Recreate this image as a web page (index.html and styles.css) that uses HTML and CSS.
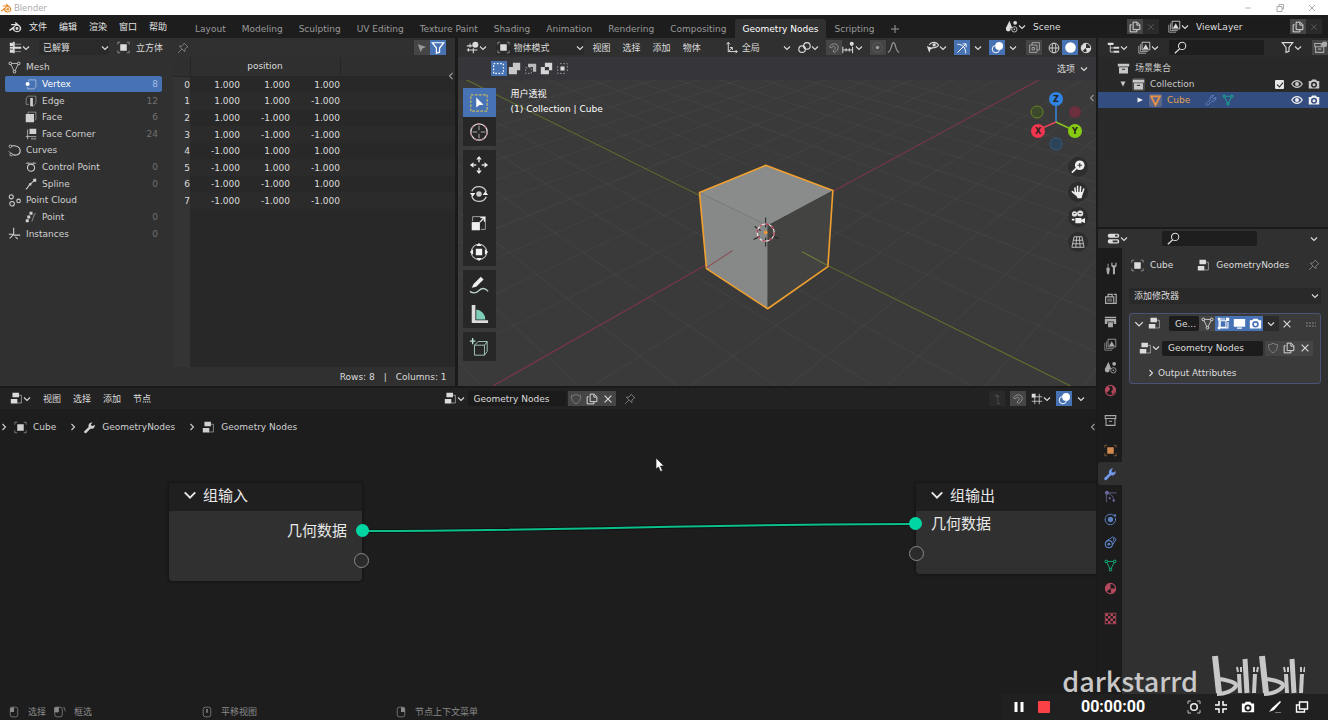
FILE: index.html
```html
<!DOCTYPE html>
<html lang="zh-CN">
<head>
<meta charset="utf-8">
<title>Blender</title>
<link rel="stylesheet" href="styles.css">
</head>
<body>
<svg class="sprite" aria-hidden="true">
  <symbol id="chev" viewBox="0 0 8 8"><path d="M1 2.5 4 5.5 7 2.5" fill="none" stroke="currentColor" stroke-width="1.1"/></symbol>
  <symbol id="right" viewBox="0 0 8 8"><path d="M2.5 1 5.5 4 2.5 7" fill="none" stroke="currentColor" stroke-width="1.1"/></symbol>
  <symbol id="left" viewBox="0 0 8 8"><path d="M5.5 1 2.5 4 5.5 7" fill="none" stroke="currentColor" stroke-width="1.1"/></symbol>
  <symbol id="blender" viewBox="0 0 16 16"><path d="M1 11.5 8.2 6H3.6V4.6h5.6L7.6 3.3l1.2-1 4.9 4.2A4.9 4.4 0 1 1 5.400 10.500L2.200 12.600Z" fill="currentColor"/><circle cx="10.300" cy="9.700" r="3" fill="var(--hole,#1d1d1d)"/><circle cx="10.300" cy="9.700" r="1.600" fill="currentColor"/></symbol>
  <symbol id="sheet" viewBox="0 0 16 16"><path d="M1 2h4v4H1zM1 7h14v2.500H1zM1 10.500h4v4H1z" fill="currentColor"/><path d="M6 1v14" stroke="currentColor" stroke-width="2"/><path d="M7 4h8M7 13h8" stroke="currentColor" stroke-opacity=".6" fill="none"/></symbol>
  <symbol id="object" viewBox="0 0 16 16"><path d="M4 4h8v8H4z" fill="currentColor"/><path d="M1 4.500V1.500h3M12 1.500h3v3M15 11.500v3h-3M4 14.500H1v-3" fill="none" stroke="currentColor" stroke-opacity=".6"/></symbol>
  <symbol id="pin" viewBox="0 0 16 16"><path d="m9.500 1.500 5 5-1.500.5-2.500 2.500V13L3 5.500l3.500-.200L9 3zM6.500 9.500 1.500 14.500" fill="none" stroke="currentColor" stroke-width="1.100"/></symbol>
  <symbol id="arrow" viewBox="0 0 16 16"><path d="m2.500 3 11 3.500-5 2.200-2.300 5z" fill="currentColor"/></symbol>
  <symbol id="funnel" viewBox="0 0 16 16"><path d="M1.500 2h13L9.800 8v4.800L6.200 14V8z" fill="none" stroke="currentColor" stroke-width="1.400"/></symbol>
  <symbol id="mesh" viewBox="0 0 16 16"><path d="M3 3h10L8 13.500z" fill="none" stroke="currentColor"/><g fill="var(--hole,#303030)" stroke="currentColor" stroke-width="1.200"><circle cx="2.800" cy="3" r="1.600"/><circle cx="13.200" cy="3" r="1.600"/><circle cx="8" cy="13.200" r="1.600"/></g></symbol>
  <symbol id="vertex" viewBox="0 0 16 16"><path d="M5 4.500V2.500h9.500v9L12 14.500H3.500V12" fill="none" stroke="currentColor" stroke-opacity=".6"/><circle cx="3.500" cy="8" r="2.700" fill="currentColor"/></symbol>
  <symbol id="edge" viewBox="0 0 16 16"><path d="M5 12.500H1.500V4l3-2.500h10v9l-3 4H9" fill="none" stroke="currentColor" stroke-opacity=".65"/><path d="M7 4h3.500v11H7z" fill="currentColor"/></symbol>
  <symbol id="face" viewBox="0 0 16 16"><path d="M4 4V1.500h10.500V11l-2 1.500" fill="none" stroke="currentColor" stroke-opacity=".7"/><path d="M1 4h11v11H1z" fill="currentColor"/></symbol>
  <symbol id="corner" viewBox="0 0 16 16"><path d="M6 1h9v7H6z" fill="currentColor"/><path d="M3.500 2v13M1 11.500h14M8 14.500h7" fill="none" stroke="currentColor"/></symbol>
  <symbol id="curve" viewBox="0 0 16 16"><path d="M4 2.500c6-1 11 1 11 6s-6 6-9 4.500" fill="none" stroke="currentColor" stroke-width="1.300"/><path d="m1 9 3.500 3.500" stroke="currentColor"/><circle cx="3" cy="2.800" r="1.600" fill="#303030" stroke="currentColor"/><circle cx="4" cy="13" r="1.600" fill="#303030" stroke="currentColor"/></symbol>
  <symbol id="cpoint" viewBox="0 0 16 16"><circle cx="8" cy="9" r="4.700" fill="none" stroke="currentColor" stroke-width="1.400"/><path d="M1 3h14M5 1.500 3.500 3 5 4.500M11 1.500 12.500 3 11 4.500" fill="none" stroke="currentColor" stroke-width=".9"/></symbol>
  <symbol id="spline" viewBox="0 0 16 16"><path d="M1 15C5 13 4 10 7 8s4-3 6-6" fill="none" stroke="currentColor" stroke-width="1.400"/><path d="M11 1h4v4h-4zM5.500 7h3v3h-3z" fill="currentColor"/></symbol>
  <symbol id="cloud" viewBox="0 0 16 16"><g fill="none" stroke="currentColor" stroke-width="1.300"><circle cx="4" cy="3.500" r="2.500"/><circle cx="5" cy="12" r="2.800"/><circle cx="13" cy="8.500" r="2.200"/></g></symbol>
  <symbol id="point" viewBox="0 0 16 16"><path d="M6 1h4v4H6zM3 6h4v4H3zM1 11h4v4H1z" fill="currentColor"/><path d="M14 3c-3 2-2 5-5 11" fill="none" stroke="currentColor" stroke-opacity=".5" stroke-width="1.500"/></symbol>
  <symbol id="instances" viewBox="0 0 16 16"><path d="M7 1v9M7 10l8 0M7 9 2 14M1 9h5M9 12l3 3" fill="none" stroke="currentColor" stroke-width="1.300"/></symbol>
  <symbol id="view3d" viewBox="0 0 16 16"><path d="M1 6h7M1 11h13M5 3v5M9 9v6M3 9v4" stroke="currentColor" stroke-width="1.300" fill="none"/><circle cx="11.500" cy="4.500" r="3.700" fill="currentColor"/></symbol>
  <symbol id="axes" viewBox="0 0 16 16"><path d="M4 13V2M2 4l2-2.500L6 4M4 13h11M13 11l2 2-2 2M4 13l5-5M9 11V8H6" fill="none" stroke="currentColor" stroke-width="1.200"/></symbol>
  <symbol id="link" viewBox="0 0 16 16"><g fill="none" stroke="currentColor" stroke-width="1.400"><circle cx="5" cy="10" r="4"/><circle cx="11" cy="6" r="4"/></g><circle cx="8" cy="8" r="1.200" fill="currentColor"/></symbol>
  <symbol id="magnet" viewBox="0 0 16 16"><path d="M2 6.500C5 1 13 1 13.500 7c.2 3-2 5-4.500 7L6.500 12c2-1.500 3.500-3 3-5-.6-2-3-2-5 1z" fill="none" stroke="currentColor" stroke-width="1.200"/></symbol>
  <symbol id="snap" viewBox="0 0 16 16"><path d="M1 7v8M5 9v4M9 9v4M13 7v8M1 11h12" fill="none" stroke="currentColor" stroke-width="1.200"/><circle cx="12" cy="3.500" r="2.500" fill="currentColor"/></symbol>
  <symbol id="gridsnap" viewBox="0 0 16 16"><path d="M5 1v14M11 1v14M1 5h14M1 11h14" fill="none" stroke="currentColor"/><path d="M1 1h5v5H1z" fill="currentColor"/></symbol>
  <symbol id="dot" viewBox="0 0 16 16"><circle cx="8" cy="8" r="6" fill="none" stroke="currentColor" stroke-opacity=".3"/><circle cx="8" cy="8" r="2.200" fill="currentColor"/></symbol>
  <symbol id="falloff" viewBox="0 0 16 16"><path d="M1 14C6 13 5 2 8 2s2 11 7 12" fill="none" stroke="currentColor" stroke-width="1.400"/></symbol>
  <symbol id="eyesel" viewBox="0 0 16 16"><path d="M4 5c3-5 9-4 11.500 0C13 8.500 9 9 7 7.500" fill="none" stroke="currentColor" stroke-width="1.400"/><circle cx="10" cy="4.800" r="2" fill="currentColor"/><path d="m1 6 8 3-3.500 1.500L4 14.500z" fill="currentColor"/></symbol>
  <symbol id="gizmo" viewBox="0 0 16 16"><path d="M2 3c7 0 11 5 11 12M2 14 13 3M9 2.500h4.500V7" fill="none" stroke="currentColor" stroke-width="1.300"/></symbol>
  <symbol id="overlay" viewBox="0 0 16 16"><circle cx="10" cy="6" r="4.800" fill="currentColor"/><circle cx="6" cy="10" r="4.500" fill="none" stroke="currentColor" stroke-width="1.200"/></symbol>
  <symbol id="xray" viewBox="0 0 16 16"><path d="M2 5h9v9H2zM5 5V2h9v9h-3M5 8h3v3H5z" fill="none" stroke="currentColor" stroke-width="1.100"/></symbol>
  <symbol id="wire" viewBox="0 0 16 16"><g fill="none" stroke="currentColor" stroke-width="1.200"><circle cx="8" cy="8" r="6.500"/><ellipse cx="8" cy="8" rx="2.600" ry="6.500"/><path d="M1.500 8h13"/></g></symbol>
  <symbol id="solid" viewBox="0 0 16 16"><circle cx="8" cy="8" r="6.500" fill="currentColor"/></symbol>
  <symbol id="material" viewBox="0 0 16 16"><circle cx="8" cy="8" r="6.300" fill="none" stroke="currentColor" stroke-width="1.300"/><path d="M8 1.500A6.500 6.500 0 0 0 3 12l5-4zM8 8h6.500A6.500 6.500 0 0 1 9 14.400z" fill="currentColor"/></symbol>
  <symbol id="scene" viewBox="0 0 16 16"><path d="M5.500 1 9 10H1z" fill="currentColor"/><circle cx="4" cy="11" r="3" fill="currentColor"/><circle cx="12.500" cy="3.500" r="2.300" fill="currentColor"/><circle cx="11.500" cy="11.500" r="3.300" fill="var(--hole,#1d1d1d)" stroke="currentColor"/><circle cx="11.500" cy="11.500" r="1" fill="currentColor"/></symbol>
  <symbol id="layers" viewBox="0 0 16 16"><path d="M5 1.500h9.500V11H5z" fill="none" stroke="currentColor"/><path d="M3 4v9h9M1 6v9h9" fill="none" stroke="currentColor" stroke-opacity=".8"/><path d="m6 10 3.500-6L13 10z" fill="currentColor"/></symbol>
  <symbol id="copy" viewBox="0 0 16 16"><path d="M5.500 1.500h5.500l3.500 3.500v6.500h-9zM10.500 2v3.500H14M3.500 5H1.500v9.500h9V12" fill="none" stroke="currentColor" stroke-width="1.300"/></symbol>
  <symbol id="x" viewBox="0 0 16 16"><path d="m3.500 3.500 9 9M12.500 3.500l-9 9" stroke="currentColor" stroke-width="1.500"/></symbol>
  <symbol id="shield" viewBox="0 0 16 16"><path d="M2 3.500C4.500 3.500 6 3 8 1.500c2 1.500 3.500 2 6 2 0 5-1 8.500-6 11-5-2.500-6-6-6-11z" fill="none" stroke="currentColor" stroke-width="1.100"/></symbol>
  <symbol id="outliner" viewBox="0 0 16 16"><path d="M1 2h7v3H1zM8 7h7v2.500H8zM8 12h7v2.500H8z" fill="currentColor"/><path d="M4 5v8.500h4M4 8.500h4" fill="none" stroke="currentColor"/></symbol>
  <symbol id="search" viewBox="0 0 16 16"><circle cx="10" cy="6" r="4.500" fill="none" stroke="currentColor" stroke-width="1.300"/><path d="m7 9.500-6 5.500" stroke="currentColor" stroke-width="1.500"/></symbol>
  <symbol id="newcol" viewBox="0 0 16 16"><path d="M2 7h10v7H2zM1 3h8v4H1zM5 10h4" fill="none" stroke="currentColor" stroke-width="1.300"/><circle cx="13" cy="4" r="3.500" fill="currentColor"/></symbol>
  <symbol id="box" viewBox="0 0 16 16"><path d="M1 2h14v3.500H1zM2.500 6.500h11V14h-11z" fill="currentColor"/><path d="M6 9h4" stroke="#444" stroke-width="1.500"/></symbol>
  <symbol id="boxline" viewBox="0 0 16 16"><path d="M1.500 2h13v3.500h-13zM2.500 5.500v8.500h11V5.500M6 9h4" fill="none" stroke="currentColor" stroke-width="1.300"/></symbol>
  <symbol id="eye" viewBox="0 0 16 16"><path d="M1 8c3.500-6 10.500-6 14 0-3.500 6-10.500 6-14 0z" fill="none" stroke="currentColor" stroke-width="1.500"/><circle cx="8" cy="8" r="2.700" fill="currentColor"/></symbol>
  <symbol id="camera" viewBox="0 0 16 16"><path fill-rule="evenodd" d="M1 4h3l1.500-2h5L12 4h3v10H1zm7 1a4 4 0 1 0 0 8 4 4 0 0 0 0-8zm0 2a2 2 0 1 1 0 4 2 2 0 0 1 0-4z" fill="currentColor"/></symbol>
  <symbol id="wrench" viewBox="0 0 16 16"><path d="M1.500 12.500 7 7.500C6 4.500 8 1.500 11.500 1.800L9.500 4.500l2 2 3-2c.5 3.500-2.300 5.800-5.500 5L4 14.800c-1.500.8-3.200-.8-2.500-2.300z" fill="currentColor"/></symbol>
  <symbol id="wrenchline" viewBox="0 0 16 16"><path d="M1.500 12.500 7 7.500C6 4.500 8 1.500 11.500 1.800L9.500 4.500l2 2 3-2c.5 3.500-2.300 5.800-5.500 5L4 14.800c-1.500.8-3.200-.8-2.500-2.300z" fill="none" stroke="currentColor"/></symbol>
  <symbol id="tri" viewBox="0 0 16 16"><path d="M2.500 3h11L8 13.500z" fill="none" stroke="currentColor" stroke-width="2.200"/></symbol>
  <symbol id="props" viewBox="0 0 16 16"><rect x="1" y="2" width="14" height="5" rx="2" fill="currentColor"/><rect x="1" y="9" width="14" height="5" rx="2" fill="currentColor"/><path d="M10 3.500h3v2h-3zM7 10.500h6v2H7z" fill="#303030"/></symbol>
  <symbol id="nodes" viewBox="0 0 16 16"><path d="M3 1h8v5.500H3zM1 8.500h8V14H1z" fill="currentColor"/><path d="M11 4h3v9.500H9" fill="none" stroke="currentColor" stroke-opacity=".7"/></symbol>
  <symbol id="tool" viewBox="0 0 16 16"><path d="M3 7h4v3L6 15H4L3 10zM4.500 2h1v5h-1zM9 1v4l2 2v8h2.500V7l2-2V1h-1.500v3h-3.500V1z" fill="currentColor"/></symbol>
  <symbol id="render" viewBox="0 0 16 16"><path d="M2 6h10v8H2zM5 6V3h5v3M12 3h3v11h-3" fill="none" stroke="currentColor" stroke-width="1.500"/><path d="M4 8h6v4H4z" fill="currentColor" fill-opacity=".5"/></symbol>
  <symbol id="output" viewBox="0 0 16 16"><path d="M1 2h14v2H1zM1 5h14v6h-3V8H4v3H1zM5 9h6v6H5z" fill="currentColor"/></symbol>
  <symbol id="world" viewBox="0 0 16 16"><circle cx="8" cy="8" r="6.300" fill="none" stroke="currentColor" stroke-width="1.300"/><path d="M3 3c3 0 5 2 4 4s-3 2-4 4L1.500 7zM10 2l4 3-1 5-3 3-1-4 2-2z" fill="currentColor"/></symbol>
  <symbol id="particles" viewBox="0 0 16 16"><circle cx="3.500" cy="3.500" r="2.500" fill="currentColor"/><path d="M3 3.500V15M3.500 3.500h12M4 4c6 1 8 5 8 9" fill="none" stroke="currentColor"/><circle cx="12" cy="13" r="1.500" fill="currentColor"/><circle cx="7" cy="10" r="1.300" fill="currentColor"/></symbol>
  <symbol id="physics" viewBox="0 0 16 16"><path d="M12 3A6.500 6.500 0 1 0 14 6" fill="none" stroke="currentColor" stroke-width="1.200"/><circle cx="8" cy="8" r="3.300" fill="currentColor"/><circle cx="13.500" cy="3" r="1.500" fill="currentColor"/></symbol>
  <symbol id="constraint" viewBox="0 0 16 16"><circle cx="6" cy="10" r="4.300" fill="none" stroke="currentColor" stroke-width="1.500"/><circle cx="6" cy="10" r="1.700" fill="currentColor"/><path d="m3 6 8-5 4 3-4.500 7M12 2.500v4" fill="none" stroke="currentColor" stroke-width="1.200"/></symbol>
  <symbol id="texture" viewBox="0 0 16 16"><rect x="1.500" y="1.500" width="13" height="13" fill="none" stroke="currentColor"/><path d="M2 2h3v3H2zM8 2h3v3H8zM5 5h3v3H5zM11 5h3v3h-3zM2 8h3v3H2zM8 8h3v3H8zM5 11h3v3H5zM11 11h3v3h-3z" fill="currentColor"/></symbol>
  <symbol id="editmode" viewBox="0 0 16 16"><path d="M4 4.500h7v8H4zM2 2.500h8M2.500 2v12M2 13.500h11.500V6" fill="none" stroke="currentColor" stroke-width="1.300"/><path d="M11 1h4v4h-4zM1 1h3v3H1zM1 12h3v3H1z" fill="currentColor"/></symbol>
  <symbol id="monitor" viewBox="0 0 16 16"><path d="M1 2.500h14V12H1zM5 13h6v1.500H5z" fill="currentColor"/></symbol>
  <symbol id="mouseL" viewBox="0 0 16 16"><rect x="3" y="1.500" width="10" height="13" rx="3" fill="none" stroke="currentColor"/><path d="M3 2h5v6H3z" fill="currentColor"/></symbol>
  <symbol id="mouseD" viewBox="0 0 16 16"><rect x="1" y="1.500" width="10" height="13" rx="3" fill="none" stroke="currentColor"/><path d="M1 2h5v6H1zM13 1l2 6" fill="currentColor" stroke="currentColor"/></symbol>
  <symbol id="mouseM" viewBox="0 0 16 16"><rect x="3" y="1.500" width="10" height="13" rx="3" fill="none" stroke="currentColor"/><path d="M7 4h2v5H7z" fill="currentColor"/></symbol>
  <symbol id="mouseR" viewBox="0 0 16 16"><rect x="3" y="1.500" width="10" height="13" rx="3" fill="none" stroke="currentColor"/><path d="M8 2h5v6H8z" fill="currentColor"/></symbol>
</svg>

<header class="titlebar">
  <svg class="i12 logo-orange"><use href="#blender"/></svg><span>Blender</span>
  <div class="winctl">
    <svg class="i10" viewBox="0 0 10 10"><path d="M2 5h6" stroke="#bbb"/></svg>
    <svg class="i10" viewBox="0 0 10 10"><path d="M2 3.500h5v5H2zM4 3.500v-2h4.500V6H7" fill="none" stroke="#aaa"/></svg>
    <svg class="i10" viewBox="0 0 10 10"><path d="m2 2 6 6M8 2 2 8" stroke="#aaa"/></svg>
  </div>
</header>

<nav class="topbar">
  <svg class="i14"><use href="#blender"/></svg>
  <div class="menus appmenus"><button>文件</button><button>编辑</button><button>渲染</button><button>窗口</button><button>帮助</button></div>
  <div class="tabs">
    <button>Layout</button><button>Modeling</button><button>Sculpting</button><button>UV Editing</button><button>Texture Paint</button><button>Shading</button><button>Animation</button><button>Rendering</button><button>Compositing</button><button class="active">Geometry Nodes</button><button>Scripting</button><button aria-label="添加工作区"><svg class="i8" viewBox="0 0 8 8"><path d="M4 0v8M0 4h8" stroke="currentColor"/></svg></button>
  </div>
  <div class="idblock">
    <button class="ed" aria-label="场景"><svg class="i13"><use href="#scene"/></svg><svg class="i8"><use href="#chev"/></svg></button>
    <input class="field scene-name" value="Scene" aria-label="场景名称">
    <button class="sq" aria-label="新建场景"><svg class="i12"><use href="#copy"/></svg></button><button class="sq off" aria-label="移除场景"><svg class="i10"><use href="#x"/></svg></button>
  </div>
  <div class="idblock">
    <button class="ed" aria-label="视图层"><svg class="i13"><use href="#layers"/></svg><svg class="i8"><use href="#chev"/></svg></button>
    <input class="field scene-name" value="ViewLayer" aria-label="视图层名称">
    <button class="sq" aria-label="新建视图层"><svg class="i12"><use href="#copy"/></svg></button><button class="sq off" aria-label="移除视图层"><svg class="i10"><use href="#x"/></svg></button>
  </div>
</nav>

<main class="workspace">
  <div class="left">
    <div class="upper">
      <section class="area spreadsheet">
        <div class="hdr">
          <button class="ed" aria-label="编辑器类型"><svg class="i13"><use href="#sheet"/></svg><svg class="i8"><use href="#chev"/></svg></button>
          <label class="drop drop-eval"><select aria-label="求值状态"><option>已解算</option></select><svg class="i8"><use href="#chev"/></svg></label>
          <span class="objname"><svg class="i13"><use href="#object"/></svg>立方体</span>
          <button class="bare dim" aria-label="固定"><svg class="i12"><use href="#pin"/></svg></button>
          <span class="grow"></span>
          <button class="sq dim" aria-label="仅选中项"><svg class="i12"><use href="#arrow"/></svg></button><button class="sq on" aria-label="筛选"><svg class="i14"><use href="#funnel"/></svg></button>
        </div>
        <div class="sheetbody">
          <ul class="tree">
            <li><svg class="i13"><use href="#mesh"/></svg><span>Mesh</span></li>
            <li class="child sel"><svg class="i12"><use href="#vertex"/></svg><span>Vertex</span><b>8</b></li>
            <li class="child"><svg class="i12"><use href="#edge"/></svg><span>Edge</span><b>12</b></li>
            <li class="child"><svg class="i12"><use href="#face"/></svg><span>Face</span><b>6</b></li>
            <li class="child"><svg class="i12"><use href="#corner"/></svg><span>Face Corner</span><b>24</b></li>
            <li><svg class="i13"><use href="#curve"/></svg><span>Curves</span></li>
            <li class="child"><svg class="i12"><use href="#cpoint"/></svg><span>Control Point</span><b>0</b></li>
            <li class="child"><svg class="i12"><use href="#spline"/></svg><span>Spline</span><b>0</b></li>
            <li><svg class="i13"><use href="#cloud"/></svg><span>Point Cloud</span></li>
            <li class="child"><svg class="i12"><use href="#point"/></svg><span>Point</span><b>0</b></li>
            <li><svg class="i13"><use href="#instances"/></svg><span>Instances</span><b>0</b></li>
          </ul>
          <div class="sheet">
            <table>
              <colgroup><col class="c-idx"><col class="c-val"><col class="c-val"><col class="c-val"><col></colgroup>
              <thead><tr><th></th><th colspan="3">position</th><th class="rest"></th></tr></thead>
              <tbody>
                <tr><td>0</td><td>1.000</td><td>1.000</td><td>1.000</td><td></td></tr>
                <tr><td>1</td><td>1.000</td><td>1.000</td><td>-1.000</td><td></td></tr>
                <tr><td>2</td><td>1.000</td><td>-1.000</td><td>1.000</td><td></td></tr>
                <tr><td>3</td><td>1.000</td><td>-1.000</td><td>-1.000</td><td></td></tr>
                <tr><td>4</td><td>-1.000</td><td>1.000</td><td>1.000</td><td></td></tr>
                <tr><td>5</td><td>-1.000</td><td>1.000</td><td>-1.000</td><td></td></tr>
                <tr><td>6</td><td>-1.000</td><td>-1.000</td><td>1.000</td><td></td></tr>
                <tr><td>7</td><td>-1.000</td><td>-1.000</td><td>-1.000</td><td></td></tr>
              </tbody>
            </table>
            <svg class="i8 fold"><use href="#left"/></svg>
          </div>
        </div>
        <footer class="sheetfoot"><span>Rows: 8</span><span>|</span><span>Columns: 1</span></footer>
      </section>

      <section class="area viewport">
        <div class="hdr vhdr">
          <button class="ed" aria-label="编辑器类型"><svg class="i13"><use href="#view3d"/></svg><svg class="i8"><use href="#chev"/></svg></button>
          <label class="drop drop-mode"><svg class="i13"><use href="#object"/></svg><select aria-label="模式"><option>物体模式</option></select><svg class="i8"><use href="#chev"/></svg></label>
          <div class="menus"><button>视图</button><button>选择</button><button>添加</button><button>物体</button></div>
          <span class="grow"></span>
          <label class="drop drop-orient"><svg class="i13"><use href="#axes"/></svg><select aria-label="坐标系"><option>全局</option></select><svg class="i8"><use href="#chev"/></svg></label>
          <button class="ed" aria-label="轴心点"><svg class="i13"><use href="#link"/></svg><svg class="i8"><use href="#chev"/></svg></button>
          <div class="pair"><button class="sq dim" aria-label="吸附"><svg class="i12"><use href="#magnet"/></svg></button><button class="ed" aria-label="吸附到"><svg class="i13"><use href="#snap"/></svg><svg class="i8"><use href="#chev"/></svg></button></div>
          <div class="pair"><button class="sq dim" aria-label="衰减编辑"><svg class="i13"><use href="#dot"/></svg></button><button class="sq clear dim" aria-label="衰减"><svg class="i13"><use href="#falloff"/></svg></button></div>
          <span class="grow"></span>
          <div class="viewctl">
          <button class="ed" aria-label="可见性"><svg class="i13"><use href="#eyesel"/></svg><svg class="i8"><use href="#chev"/></svg></button>
          <div class="pair wide"><button class="sq on" aria-label="Gizmo"><svg class="i12"><use href="#gizmo"/></svg></button><svg class="i8"><use href="#chev"/></svg></div>
          <div class="pair wide"><button class="sq on" aria-label="叠加层"><svg class="i13"><use href="#overlay"/></svg></button><svg class="i8"><use href="#chev"/></svg></div>
          <button class="sq" aria-label="透视模式"><svg class="i13"><use href="#xray"/></svg></button>
          <div class="pair shade"><button class="sq clear" aria-label="线框"><svg class="i12"><use href="#wire"/></svg></button><button class="sq on" aria-label="实体"><svg class="i13"><use href="#solid"/></svg></button><button class="sq clear" aria-label="材质预览"><svg class="i12"><use href="#material"/></svg></button></div>
          </div>
        </div>
        <div class="scene">
          <svg class="scene3d" viewBox="0 0 639 328" preserveAspectRatio="xMidYMid slice" role="img" aria-label="Cube">
            <g fill="none" stroke="#fff" stroke-opacity=".04">
              <path d="M-460-212 24 328M-460-212 122 328M-460-212 220 328M-460-212 318 328M-460-212 416 328M-460-212 514 328M-460-212 710 328M-460-212 808 328M-460-212 906 328M-460-212 1004 328M-460-212 1102 328M-460-212 1200 328M-460-212 1298 328M-460-212 1396 328M-460-212 1494 328M-460-212 1592 328"/>
              <path d="M1000-212 135 328M1000-212 233 328M1000-212 331 328M1000-212 429 328M1000-212 527 328M1000-212 625 328M1000-212-61 328M1000-212-159 328M1000-212-257 328M1000-212-355 328M1000-212-453 328M1000-212-551 328M1000-212-649 328M1000-212-747 328M1000-212-845 328M1000-212-943 328"/>
            </g>
            <path d="M36 328 L249 207M375 134 582 22" stroke="#86354a"/>
            <path d="M8 22 242 138M370 208 612 328" stroke="#66702a"/>
            <path d="M308 108 242 135 310 168 375 133z" fill="#8a8c8b"/>
            <path d="M242 135 310 168V251L249 211z" fill="#868988"/>
            <path d="M310 168 375 133 370 209 310 251z" fill="#434441"/>
            <path d="M308 108 242 135 249 211 310 251 370 209 375 133z" fill="none" stroke="#f0a030" stroke-width="1.600" stroke-linejoin="round"/>
            <path d="M249 210 275 193" stroke="#8a4a50"/><path d="M344 194 370 208" stroke="#78803a"/>
            <path d="M308 160v10M308 180v9M296 182l6-3M313 178l8 3M297 169l6 4" stroke="#222"/>
            <circle cx="308" cy="175" r="8.500" fill="none" stroke="#eee" stroke-width="1.200"/><circle cx="308" cy="175" r="8.500" fill="none" stroke="#b33950" stroke-width="1.300" stroke-dasharray="3.300 3.300"/>
            <circle cx="308" cy="175" r="1.800" fill="#f5962d"/>
          </svg>
          <div class="toolsettings">
            <div class="selmodes">
              <button class="sq on" aria-label="新建选择"><svg class="i13" viewBox="0 0 16 16"><rect x="2" y="2" width="12" height="12" fill="none" stroke="#fff" stroke-width="1.400" stroke-dasharray="2 2"/></svg></button>
              <button class="sq clear" aria-label="扩展选择"><svg class="i13" viewBox="0 0 16 16"><path d="M6 1h9v9h-4v5H1V6h5z" fill="#c8c8c8"/></svg></button>
              <button class="sq clear" aria-label="减去选择"><svg class="i13" viewBox="0 0 16 16"><path d="M5 2h10v10h-4V6H5z" fill="#bbb"/><rect x="2" y="7" width="7" height="7" fill="none" stroke="#aaa" stroke-dasharray="2 2"/></svg></button>
              <button class="sq clear" aria-label="反转选择"><svg class="i13" viewBox="0 0 16 16"><path fill-rule="evenodd" d="M6 1h9v9h-4v5H1V6h5zm0 5v4h5V6z" fill="#d5d5d5"/></svg></button>
              <button class="sq clear" aria-label="相交选择"><svg class="i13" viewBox="0 0 16 16"><path d="M5.500 5.500h5v5h-5z" fill="#ddd"/><path d="M5 2h9v9M11 14H2V5" fill="none" stroke="#aaa" stroke-dasharray="2 2"/></svg></button>
            </div>
            <button class="options">选项<svg class="i8"><use href="#chev"/></svg></button>
          </div>
          <div class="overlaytext"><p>用户透视</p><p>(1) Collection | Cube</p></div>
          <div class="toolbar">
            <div class="toolgroup">
              <button class="on" aria-label="框选"><svg class="i22" viewBox="0 0 22 22"><rect x="2" y="2" width="18" height="18" fill="none" stroke="#c9b860" stroke-width="1.300" stroke-dasharray="3 1.500"/><path d="m8 5 8 8-4.500.3L8 16z" fill="#fff"/></svg></button>
              <button aria-label="游标"><svg class="i22" viewBox="0 0 22 22"><circle cx="11" cy="11" r="9" fill="none" stroke="#ddd" stroke-width="1.400"/><circle cx="11" cy="11" r="9" fill="none" stroke="#b98088" stroke-width="1.400" stroke-dasharray="4 4"/><path d="M11 4v5M11 13v5M4 11h5M13 11h5" stroke="#bbb"/></svg></button>
            </div>
            <div class="toolgroup">
              <button aria-label="移动"><svg class="i22" viewBox="0 0 22 22"><path d="m11 1 3 4H8zM11 21l3-4H8zM1 11l4-3v6zM21 11l-4-3v6z" fill="#eee"/><path d="M11 5v3M11 14v3M5 11h3M14 11h3" stroke="#ddd" stroke-width="1.600"/></svg></button>
              <button aria-label="旋转"><svg class="i22" viewBox="0 0 22 22"><path d="M3 8a8.500 8.500 0 0 1 16 1M19 14a8.500 8.500 0 0 1-16-1" fill="none" stroke="#ccc" stroke-width="1.500"/><circle cx="11" cy="11" r="3" fill="#ccc"/><path d="M1 10h6l-3 4zM15 12h6l-3-4z" fill="#eee"/></svg></button>
              <button aria-label="缩放"><svg class="i22" viewBox="0 0 22 22"><path d="M4 9V4h14v14h-5" fill="none" stroke="#aaa"/><path d="M3 10h9v9H3z" fill="#eee"/><path d="m12 10 4-4M12.500 5H17v4.500" fill="none" stroke="#eee" stroke-width="1.400"/></svg></button>
              <button aria-label="变换"><svg class="i22" viewBox="0 0 22 22"><circle cx="11" cy="11" r="8.500" fill="none" stroke="#bbb" stroke-width="1.200"/><path d="M7.500 7.500h7v7h-7zM11 1l3 3.500H8zM11 21l3-3.500H8zM1 11l3.500-3v6zM21 11l-3.500-3v6z" fill="#f2f2f2"/></svg></button>
            </div>
            <div class="toolgroup">
              <button aria-label="标注"><svg class="i22" viewBox="0 0 22 22"><path d="m3 14 2-4 8-8 3 3-8 8z" fill="#eee"/><path d="M1 18c4 3 7 2 10-1s7-3 10 1" fill="none" stroke="#bcd0cc" stroke-width="1.500"/></svg></button>
              <button aria-label="测量"><svg class="i22" viewBox="0 0 22 22"><path d="M8 6a11 11 0 0 1 10 11H8z" fill="#7fcfb8"/><path d="M3 1h4v17h14v3H3z" fill="#ddd"/></svg></button>
            </div>
            <div class="toolgroup">
              <button aria-label="添加立方体"><svg class="i22" viewBox="0 0 22 22"><path d="M6 9h11v11H6zM6 9l4-4h10v11l-3 4M17 9l3-4" fill="none" stroke="#a9cdc4"/><path d="M4 1v7M1 4.500h6" stroke="#b8e0d5" stroke-width="1.500"/></svg></button>
            </div>
          </div>
          <div class="navgizmo">
            <svg class="axisball" viewBox="0 0 56 64">
              <path d="M27 31V8" stroke="#3a86d8" stroke-width="1.500"/><path d="M27 31 9 39" stroke="#e0455a" stroke-width="1.500"/><path d="M27 31l19 9" stroke="#86c01f" stroke-width="1.500"/>
              <circle cx="8" cy="21" r="6" fill="#3c4a2c" stroke="#68861f"/><circle cx="46" cy="21" r="6" fill="#6b2f3d"/><circle cx="27" cy="53" r="6" fill="#2d435a" stroke="#34597f"/>
              <circle cx="27" cy="8" r="7" fill="#2f83e3"/><circle cx="9" cy="40" r="7" fill="#f2364f"/><circle cx="46" cy="40" r="7" fill="#86cb12"/>
              <text x="27" y="11" text-anchor="middle">Z</text><text x="9" y="43" text-anchor="middle">X</text><text x="46" y="43" text-anchor="middle">Y</text>
            </svg>
            <div class="navbtns">
              <button aria-label="缩放视图"><svg class="i14" viewBox="0 0 16 16"><circle cx="10" cy="6" r="5.500" fill="#eee"/><path d="m6 9.500-5 5" stroke="#eee" stroke-width="2"/><path d="M10 3.500v5M7.500 6h5" stroke="#333" stroke-width="1.200"/></svg></button>
              <button aria-label="移动视图"><svg class="i14" viewBox="0 0 16 16"><path d="M5 9 4.500 3.500M7.500 8V1.500M10.500 8 11 2M13 9l1.500-4.500M5.500 11 1.500 7.500" stroke="#eee" stroke-width="1.800" stroke-linecap="round"/><path d="M4 8h10l-2 7H7.500z" fill="#eee"/></svg></button>
              <button aria-label="相机视图"><svg class="i14" viewBox="0 0 16 16"><circle cx="4" cy="4.500" r="3" fill="#ddd"/><circle cx="10.500" cy="4" r="3.500" fill="#ddd"/><path d="M5 9h7v6H5zM12 11l4-2v6l-4-2zM1 10h3v2H1z" fill="#eee"/><path d="M3 4h2M9 4h3" stroke="#333"/></svg></button>
              <button aria-label="切换正交"><svg class="i14" viewBox="0 0 16 16"><path d="M3.500 2h9L15 14H1zM3 6h10M2 10h12M6.500 2 5.500 14M9.500 2l1 12" fill="none" stroke="#ccc"/></svg></button>
            </div>
          </div>
          <svg class="i8 fold"><use href="#left"/></svg>
        </div>
      </section>
    </div>

    <section class="area nodeeditor">
      <div class="hdr nhdr">
        <div class="nleft"><button class="ed" aria-label="编辑器类型"><svg class="i13"><use href="#nodes"/></svg><svg class="i8"><use href="#chev"/></svg></button>
        <div class="menus"><button>视图</button><button>选择</button><button>添加</button><button>节点</button></div></div>
        <div class="ncenter"><button class="ed" aria-label="节点树"><svg class="i13"><use href="#nodes"/></svg><svg class="i8"><use href="#chev"/></svg></button><input class="field tree-name" value="Geometry Nodes" aria-label="节点树名称"><button class="sq" aria-label="伪用户"><svg class="i12 faint"><use href="#shield"/></svg></button><button class="sq" aria-label="新建"><svg class="i12"><use href="#copy"/></svg></button><button class="sq" aria-label="断开"><svg class="i12"><use href="#x"/></svg></button><button class="bare dim" aria-label="固定"><svg class="i12"><use href="#pin"/></svg></button></div>
        <div class="nright"><button class="sq off" aria-label="上一级"><svg class="i12" viewBox="0 0 16 16"><path d="M5 3h4v11h3M6 6l3-3 3 3" fill="none" stroke="currentColor"/></svg></button><button class="sq dim" aria-label="吸附"><svg class="i12"><use href="#magnet"/></svg></button><button class="ed" aria-label="吸附到"><svg class="i12"><use href="#gridsnap"/></svg><svg class="i8"><use href="#chev"/></svg></button><button class="sq on" aria-label="叠加层"><svg class="i13"><use href="#overlay"/></svg></button><svg class="i8"><use href="#chev"/></svg></div>
      </div>
      <div class="canvas">
        <nav class="crumbs"><svg class="i8"><use href="#right"/></svg><a href="#cube"><svg class="i13"><use href="#object"/></svg>Cube</a><svg class="i8"><use href="#right"/></svg><a href="#mod"><svg class="i13"><use href="#wrench"/></svg>GeometryNodes</a><svg class="i8"><use href="#right"/></svg><a href="#tree"><svg class="i13"><use href="#nodes"/></svg>Geometry Nodes</a></nav>
        <svg class="wire" viewBox="0 0 560 20"><path d="M4 12C200 12 350 5 551 5" fill="none" stroke="#111" stroke-width="4"/><path d="M4 12C200 12 350 5 551 5" fill="none" stroke="#0bbf8b" stroke-width="2"/></svg>
        <article class="node node-in"><h2><svg class="i14"><use href="#chev"/></svg>组输入</h2><p>几何数据</p><i class="socket geo"></i><i class="socket empty"></i></article>
        <article class="node node-out"><h2><svg class="i14"><use href="#chev"/></svg>组输出</h2><p>几何数据</p><i class="socket geo"></i><i class="socket empty"></i></article>
        <svg class="cursor" viewBox="0 0 10 16"><path d="M1 1v11l2.500-2 2 4.500 2-1L5.500 9H9z" fill="#fff" stroke="#222" stroke-width=".7"/></svg>
        <svg class="i8 fold"><use href="#left"/></svg>
      </div>
    </section>
  </div>

  <aside class="right">
    <section class="area outliner">
      <div class="hdr ohdr">
        <button class="ed" aria-label="编辑器类型"><svg class="i13"><use href="#outliner"/></svg><svg class="i8"><use href="#chev"/></svg></button>
        <button class="ed" aria-label="显示模式"><svg class="i13"><use href="#layers"/></svg><svg class="i8"><use href="#chev"/></svg></button>
        <label class="searchbox"><svg class="i13"><use href="#search"/></svg><input type="search" aria-label="搜索"></label>
        <span class="grow"></span>
        <button class="ed" aria-label="筛选"><svg class="i13"><use href="#funnel"/></svg><svg class="i8"><use href="#chev"/></svg></button>
        <button class="sq dim2" aria-label="新建集合"><svg class="i13"><use href="#newcol"/></svg></button>
      </div>
      <ul class="orows">
        <li class="d0"><svg class="i13"><use href="#box"/></svg><span>场景集合</span></li>
        <li class="d1"><svg class="i8" viewBox="0 0 8 8"><path d="M1.500 1.500h5L4 6.500z" fill="currentColor"/></svg><svg class="i13 halo"><use href="#box"/></svg><span>Collection</span><em class="grow"></em><input type="checkbox" checked aria-label="启用集合"><svg class="i12"><use href="#eye"/></svg><svg class="i12"><use href="#camera"/></svg></li>
        <li class="d2 sel"><svg class="i8" viewBox="0 0 8 8"><path d="M1.500 1.500v5L7 4z" fill="currentColor"/></svg><svg class="i13 halo orange"><use href="#tri"/></svg><span>Cube</span><svg class="i12 modblue"><use href="#wrenchline"/></svg><svg class="i12 teal"><use href="#mesh"/></svg><em class="grow"></em><svg class="i12"><use href="#eye"/></svg><svg class="i12"><use href="#camera"/></svg></li>
      </ul>
    </section>

    <section class="area properties">
      <div class="hdr phdr">
        <button class="ed" aria-label="编辑器类型"><svg class="i13"><use href="#props"/></svg><svg class="i8"><use href="#chev"/></svg></button>
        <label class="searchbox"><svg class="i13"><use href="#search"/></svg><input type="search" aria-label="搜索属性"></label>
        <span class="grow"></span><button class="bare" aria-label="选项"><svg class="i8"><use href="#chev"/></svg></button>
      </div>
      <div class="pbody">
        <div class="ptabs">
          <div><button aria-label="工具"><svg class="i13"><use href="#tool"/></svg></button></div>
          <div><button aria-label="渲染"><svg class="i13"><use href="#render"/></svg></button><button aria-label="输出"><svg class="i13"><use href="#output"/></svg></button><button aria-label="视图层"><svg class="i13"><use href="#layers"/></svg></button><button aria-label="场景"><svg class="i13"><use href="#scene"/></svg></button><button class="red" aria-label="世界"><svg class="i13"><use href="#world"/></svg></button></div>
          <div><button aria-label="集合"><svg class="i13"><use href="#boxline"/></svg></button></div>
          <div><button class="orange" aria-label="物体"><svg class="i13"><use href="#object"/></svg></button><button class="blue cur" aria-label="修改器"><svg class="i14"><use href="#wrench"/></svg></button><button class="violet" aria-label="粒子"><svg class="i13"><use href="#particles"/></svg></button><button class="blue2" aria-label="物理"><svg class="i13"><use href="#physics"/></svg></button><button class="blue2" aria-label="约束"><svg class="i13"><use href="#constraint"/></svg></button><button class="green" aria-label="数据"><svg class="i13"><use href="#mesh"/></svg></button><button class="red" aria-label="材质"><svg class="i13"><use href="#material"/></svg></button></div>
          <div><button class="red" aria-label="纹理"><svg class="i13"><use href="#texture"/></svg></button></div>
        </div>
        <div class="pmain">
          <nav class="pcrumb"><a href="#cube"><svg class="i13"><use href="#object"/></svg>Cube</a><a href="#mod"><svg class="i13"><use href="#nodes"/></svg>GeometryNodes</a><svg class="i12 faint"><use href="#pin"/></svg></nav>
          <label class="drop drop-add"><select aria-label="添加修改器"><option>添加修改器</option></select><svg class="i8"><use href="#chev"/></svg></label>
          <div class="modifier">
            <div class="mrow mhead"><svg class="i10"><use href="#chev"/></svg><svg class="i13"><use href="#nodes"/></svg><input class="field" value="Ge..." aria-label="修改器名称"><button class="sq" aria-label="编辑笼"><svg class="i13"><use href="#mesh"/></svg></button><button class="sq on" aria-label="编辑模式"><svg class="i13"><use href="#editmode"/></svg></button><button class="sq on" aria-label="实时"><svg class="i13"><use href="#monitor"/></svg></button><button class="sq on" aria-label="渲染"><svg class="i13"><use href="#camera"/></svg></button><button class="sq darkbtn" aria-label="更多"><svg class="i8"><use href="#chev"/></svg></button><button class="bare" aria-label="移除修改器"><svg class="i12"><use href="#x"/></svg></button><span class="grow"></span><svg class="i10 faint" viewBox="0 0 10 10"><path d="M0 4h10M0 7h10" stroke="currentColor" stroke-dasharray="2 1"/></svg></div>
            <div class="mrow mtree"><button class="ed" aria-label="节点组"><svg class="i13"><use href="#nodes"/></svg><svg class="i8"><use href="#chev"/></svg></button><input class="field" value="Geometry Nodes" aria-label="节点组名称"><button class="sq" aria-label="伪用户"><svg class="i12 faint"><use href="#shield"/></svg></button><button class="sq" aria-label="新建"><svg class="i12"><use href="#copy"/></svg></button><button class="sq" aria-label="断开"><svg class="i12"><use href="#x"/></svg></button></div>
            <button class="mattr"><svg class="i8"><use href="#right"/></svg>Output Attributes</button>
          </div>
        </div>
      </div>
    </section>
  </aside>
</main>

<footer class="status">
  <span class="hint h1"><svg class="i12"><use href="#mouseL"/></svg>选择</span><span class="hint h2"><svg class="i12"><use href="#mouseD"/></svg>框选</span><span class="hint h3"><svg class="i12"><use href="#mouseM"/></svg>平移视图</span><span class="hint h4"><svg class="i12"><use href="#mouseR"/></svg>节点上下文菜单</span>
</footer>

<div class="recorder">
  <button aria-label="暂停"><svg class="i12" viewBox="0 0 12 12"><path d="M3 1v10M9 1v10" stroke="#fff" stroke-width="3"/></svg></button>
  <button aria-label="停止"><svg class="i12" viewBox="0 0 12 12"><rect width="12" height="12" rx="1" fill="#fb4145"/></svg></button>
  <time>00:00:00</time>
  <div class="rectools">
    <button aria-label="区域"><svg class="i14" viewBox="0 0 14 14"><circle cx="7" cy="7" r="3.300" fill="none" stroke="#eee" stroke-width="1.500"/><path d="M1 4V1h3M10 1h3v3M13 10v3h-3M4 13H1v-3" fill="none" stroke="#bbb"/></svg></button>
    <button aria-label="收起"><svg class="i14" viewBox="0 0 14 14"><path d="M5 1v4H1M9 1v4h4M5 13V9H1M9 13V9h4" fill="none" stroke="#fff" stroke-width="1.500"/></svg></button>
    <button aria-label="截图"><svg class="i14 white"><use href="#camera"/></svg></button>
    <button aria-label="画笔"><svg class="i14" viewBox="0 0 14 14"><path d="m1 12 3-4 8-7 1 1-7 8z" fill="#fff"/><path d="M7 12.500h6" stroke="#777"/></svg></button>
    <button aria-label="窗口"><svg class="i14" viewBox="0 0 14 14"><path d="M4.500 2h8v7h-8zM4 5H1.500v7h8V9.500" fill="none" stroke="#fff" stroke-width="1.400"/></svg></button>
  </div>
</div>
<div class="watermark"><span>darkstarrd</span>
  <svg class="bili" viewBox="0 0 94 42" role="img" aria-label="bilibili"><g id="half" fill="none" stroke="#c8c8c8"><path d="M4 1 8 38" stroke-width="6"/><path d="M9 24C20 26 26 28 25 31 22 36 14 39 6 39" stroke-width="4"/><path d="M28 19 29 38M44 19 43 38" stroke-width="4"/><path d="M26 12l1 5M30 12v5M43 12v5M47 12l-1 5" stroke-width="2"/><path d="M34 4 36 38" stroke-width="5"/></g><use href="#half" x="47"/></svg>
</div>
</body>
</html>
```
FILE: styles.css
```css
*{box-sizing:border-box}
html,body{height:100%}
body{margin:0;display:flex;flex-direction:column;background:#1a1a1a;color:#dcdcdc;font:9px/12px "DejaVu Sans","Noto Sans CJK SC",sans-serif;overflow:hidden;position:relative}
button,input,select{font:inherit;color:inherit;border:0;padding:0;margin:0;background:none;outline:0}
select{appearance:none;flex:1;min-width:0}
a{color:inherit;text-decoration:none}
ul{list-style:none;margin:0;padding:0}
p,h2{margin:0;font-weight:400}
svg{flex:none;display:block}
.sprite{position:absolute;width:0;height:0}
.i8{width:8px;height:8px}.i10{width:10px;height:10px}.i12{width:12px;height:12px}.i13{width:13px;height:13px}.i14{width:14px;height:14px}.i22{width:22px;height:22px}
.grow{flex:1}
.faint{color:#888}

.titlebar{height:15px;background:#fff;color:#aaa;display:flex;align-items:center;gap:2px;font-family:"Open Sans",sans-serif;flex:none}
.logo-orange{color:#e88b2a;--hole:#fff}
.winctl{margin-left:auto;display:flex;gap:22px;padding-right:11px}

.topbar{height:23px;background:#1d1d1d;display:flex;align-items:center;padding-left:8px;flex:none}
.menus{display:flex;gap:12px}
.appmenus{margin-left:7px;color:#e5e5e5}
.tabs{display:flex;margin-left:20px;align-self:flex-end;color:#999;flex:1}
.tabs button{padding:0 8px;height:19px;border-radius:3px 3px 0 0;white-space:nowrap}
.tabs .active{background:#303030;color:#fff}
.idblock{display:flex;align-items:center;margin-right:6px}
.idblock+.idblock{margin-left:3px}
.ed{display:flex;align-items:center;height:15px;border-radius:2px}
.idblock .ed{width:24px}
.field{background:#1c1c1c;height:15px;border-radius:2px;padding-left:6px;min-width:0}
.scene-name{width:98px;padding-left:4px}
.sq{width:16px;height:15px;background:#454545;display:flex;align-items:center;justify-content:center;flex:none}
.sq.on{background:#4772b3;color:#fff}
.sq.clear{background:none}
.sq.dim{color:#999}
.sq.off{background:#2a2a2a;color:#555}
.bare{display:flex;align-items:center}
.dim{color:#888}

.workspace{flex:1;min-height:0;display:grid;grid-template-columns:minmax(0,1fr) 230px;gap:2px}
.left{display:grid;grid-template-rows:348fr 315fr;gap:2px;min-width:0;min-height:0}
.upper{display:grid;grid-template-columns:455fr 639fr;gap:3px;min-width:0;min-height:0}
.area{display:flex;flex-direction:column;min-width:0;min-height:0;overflow:hidden}
.hdr{display:flex;align-items:center;height:19px;padding:0 9px;background:#303030;flex:none}
.drop{display:flex;align-items:center;height:15px;background:#2a2a2a;border-radius:2px}

.spreadsheet{background:#303030}
.drop-eval{width:70px;margin-left:9px;padding-left:4px}
.objname{display:flex;align-items:center;gap:6px;margin:0 14px 0 8px}
.sheetbody{flex:1;display:grid;grid-template-columns:173px 1fr;min-height:0}
.tree{display:grid;grid-auto-rows:1fr;height:183px;margin:2px 11px 0 5px}
.tree li{display:flex;align-items:center;gap:5px;padding:0 4px 0 3px;border-radius:2px;color:#d0d0d0}
.tree .child{padding-left:20px}
.tree b{margin-left:auto;font-weight:400;color:#707070}
.tree .sel{background:#4772b3;color:#fff}
.tree .sel b{color:#a5bce0}
.sheet{position:relative;background:linear-gradient(to right,#343434 17px,#282828 17px)}
.sheet table{width:100%;height:152px;border-collapse:collapse;table-layout:fixed}
.sheet td,.sheet th{padding:0;font-weight:400;text-align:right}
.sheet th{background:#2f2f2f;text-align:center;border-bottom:1px solid #252525;height:19px;border-right:1px solid #252525}
.c-idx{width:17px}
.c-val{width:50px}
.sheet .rest{border-right:0}
.sheet tbody tr:nth-child(even) td:not(:first-child){background:#2b2b2b}
.fold{position:absolute;right:0;top:15px;color:#999}
.sheetfoot{height:19px;display:flex;justify-content:flex-end;align-items:center;gap:9px;padding-right:8px}

.vhdr{padding:0 2px 0 8px}
.drop-mode{width:88px;margin:0 9px 0 9px;padding-left:1px;gap:4px}
.drop-orient{width:66px;gap:4px;margin-right:7px;background:none}
.pair{display:flex;align-items:center;margin-left:7px}
.viewctl{display:flex;align-items:center}
.wide{gap:4px;margin-left:7px}
.wide+.sq{margin-left:9px;color:#aaa}
.shade{margin-left:4px}
.scene{position:relative;flex:1;background:#3a3a3a;min-height:0;overflow:hidden}
.scene3d{position:absolute;inset:0;width:100%;height:100%}
.toolsettings{position:relative;height:23px;background:#36363a;display:flex;justify-content:space-between;align-items:center;padding:0 8px 0 33px}
.selmodes{display:flex}
.options{display:flex;align-items:center;gap:5px}
.overlaytext{position:absolute;left:53px;top:30px;line-height:15px;color:#fff}
.toolbar{position:absolute;left:5px;top:31px;display:flex;flex-direction:column;gap:4px}
.toolgroup button{width:33px;height:29px;background:#272727;display:flex;align-items:center;justify-content:center}
.toolgroup button.on{background:#4772b3}
.toolgroup .i22{width:20px;height:20px}
.navgizmo{position:absolute;right:8px;top:34px;display:flex;flex-direction:column;align-items:flex-end}
.axisball{width:56px;height:64px;margin-right:3px;font:bold 8px "DejaVu Sans",sans-serif;fill:#222}
.navbtns{display:flex;flex-direction:column;gap:5px;padding-top:2px}
.navbtns button{width:20px;height:20px;border-radius:10px;background:#2d2d2d;display:flex;align-items:center;justify-content:center}
.scene .fold{top:37px}

.nodeeditor{background:#1d1d1d}
.nhdr{height:21px;background:#222;display:grid;grid-template-columns:1fr auto 1fr;padding-left:10px}
.nleft,.ncenter,.nright{display:flex;align-items:center}
.nleft{gap:12px}
.tree-name{width:98px;margin-left:3px;margin-right:2px;background:#1b1b1b}
.ncenter{margin-right:18px}
.ncenter .bare{margin-left:8px}
.nright{justify-content:flex-end;gap:5px;padding-right:2px}
.canvas{position:relative;flex:1;overflow:hidden;min-height:0}
.crumbs{display:flex;align-items:center;height:36px;color:#d0d0d0}
.crumbs a{display:flex;align-items:center;gap:6px;margin:0 13px 0 6px}
.node{position:absolute;top:74px;width:193px;border-radius:4px;background:#303030;box-shadow:0 0 3px 1px #141414;font-size:15px;line-height:20px;font-family:"Noto Sans CJK SC",sans-serif;color:#e8e8e8}
.node h2{font-size:15px;background:#1f1f1f;height:28px;border-radius:4px 4px 0 0;display:flex;align-items:center;gap:6px;padding:0 0 4px 14px}
.node p{padding:0 15px}
.node-in{left:169px;height:98px}
.node-in p{text-align:right;padding-top:9px}
.node-out{left:916px;height:91px}
.node-out p{padding-top:2px}
.socket{position:absolute;border-radius:50%;width:13px;height:13px}
.geo{background:#00d6a3}
.empty{border:1px solid #8a8a8a;background:#2b2b2b;width:15px;height:15px;top:70px}
.node-in .socket{right:-7px}
.node-in .geo{top:41px}
.node-out .socket{left:-7px}
.node-out .geo{top:34px}
.node-out .empty{top:63px}
.wire{position:absolute;left:362px;top:110px;width:560px;height:20px}
.cursor{position:absolute;left:655px;top:48px;width:10px;height:16px}
.canvas .fold{top:14px;right:-1px}

.right{display:grid;grid-template-rows:189fr 474fr;gap:2px;min-height:0;min-width:0}
.outliner{background:linear-gradient(#282828,#2b2b2b)}
.ohdr{background:#2b2b2b;padding-right:0}
.ohdr .ed{margin-right:10px}
.searchbox{display:flex;align-items:center;background:#1e1e1e;height:15px;width:95px;padding-left:5px;border-radius:2px}
.searchbox input{min-width:0;flex:1}
.dim2{color:#aaa}
.orows{padding-top:3px;color:#c8c8c8}
.orows li{display:flex;align-items:center;height:16px;gap:5px;padding-right:8px}
.orows .d0{padding-left:19px}
.orows .d1{padding-left:21px}
.orows .d2{padding-left:38px}
.orows .sel{background:#334d80;color:#eee}
.orows .sel span{color:#e2a04a;margin-right:10px}
.halo{background:#4a4a4a;border-radius:2px}
.sel .halo{background:#5c6688}
.orange{color:#e8914b}
.modblue{color:#6f8ed0}.teal{color:#18b392;--hole:#334d80}
.orows input{appearance:none;width:9px;height:9px;background:#e6e6e6;border-radius:1px;position:relative;margin-right:2px}
.orows input:checked::after{content:"";position:absolute;left:3px;top:1px;width:3px;height:5px;border:solid #222;border-width:0 1px 1px 0;transform:rotate(40deg)}

.properties{background:#303030}
.phdr .searchbox{margin-left:34px}
.phdr{padding-right:10px}
.pbody{flex:1;display:grid;grid-template-columns:24px minmax(0,1fr);min-height:0}
.ptabs{background:#1c1c1c;padding-top:9px;display:flex;flex-direction:column;gap:7px;--hole:#1c1c1c;color:#aaa}
.ptabs button{width:24px;height:23px;display:flex;align-items:center;justify-content:center;border-radius:3px 0 0 3px}
.ptabs .cur{background:#303030}
.ptabs .red{color:#b4485c}.ptabs .orange{color:#d18a50}.ptabs .blue{color:#7299e8}.ptabs .blue2{color:#5b7fc0}.ptabs .violet{color:#67679a}.ptabs .green{color:#0fc087}
.pmain{padding:8px 7px 0 7px;display:flex;flex-direction:column;min-width:0}
.pcrumb{display:flex;align-items:center;height:18px;padding:0 1px 0 2px}
.pcrumb a{display:flex;align-items:center;gap:6px;margin-right:24px}
.pcrumb a+a{margin-right:auto}
.drop-add{margin-top:14px;padding:0 2px 0 5px;height:16px;background:#292929}
.modifier{margin-top:9px;border:1px solid #4a5377;border-radius:3px;background:#3a3a3b;height:71px;display:flex;flex-direction:column}
.mrow{display:flex;align-items:center;--hole:#454545}
.mhead{height:19px;padding:0 4px}
.mhead .i10+.i13{margin:0 8px 0 4px}
.mhead .field{width:30px}
.darkbtn{background:#2b2b2b}
.mhead .bare{margin-left:2px}
.mtree{height:30px;padding:0 7px 0 9px}
.mtree .field{flex:1;margin:0 2px 0 2px}
.mattr{display:flex;align-items:center;gap:3px;padding-left:17px;height:20px}

.status{height:17px;background:#1d1d1d;color:#8a8a8a;display:flex;align-items:center;flex:none;padding-left:8px}
.hint{display:flex;align-items:center;gap:8px}
.h2{margin-left:8px}.h3{margin-left:109px}.h4{margin-left:138px}
.watermark{position:absolute;right:23px;bottom:23px;display:flex;align-items:flex-end;gap:13px;color:#c8c8c8;font:500 27px/33px "Noto Sans CJK SC",sans-serif}
.bili{width:94px;height:42px}
.recorder{position:absolute;right:0;bottom:0;width:326px;height:26px;background:#202020;display:flex;align-items:center;padding-left:11px}
.recorder button{display:flex}
.recorder button+button{margin-left:13px}
.recorder time{margin-left:31px;color:#fff;font:bold 16px/20px Roboto,sans-serif}
.rectools{display:flex;margin-left:auto;padding-right:19px}
.white{color:#fff}
```
